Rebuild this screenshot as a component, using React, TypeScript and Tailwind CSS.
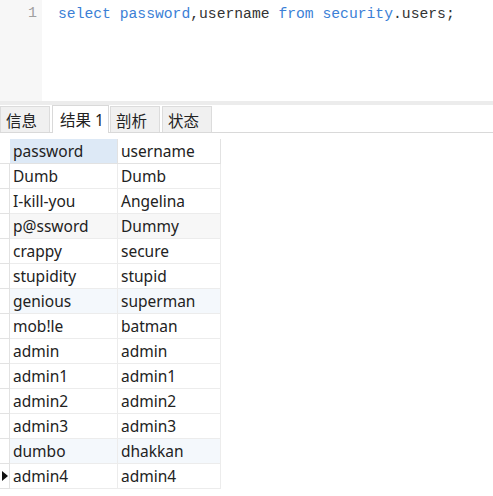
const rows: [string, string][] = [
  ["Dumb", "Dumb"],
  ["I-kill-you", "Angelina"],
  ["p@ssword", "Dummy"],
  ["crappy", "secure"],
  ["stupidity", "stupid"],
  ["genious", "superman"],
  ["mob!le", "batman"],
  ["admin", "admin"],
  ["admin1", "admin1"],
  ["admin2", "admin2"],
  ["admin3", "admin3"],
  ["dumbo", "dhakkan"],
  ["admin4", "admin4"],
];

const shade: Record<number, string> = {
  2: "bg-[#f7f7f7]",
  5: "bg-[#f4f8fc]",
  11: "bg-[#f4f8fc]",
};

const tabs = ["信息", "结果 1", "剖析", "状态"];

export default function App() {
  return (
    <div
      className="w-[493px] h-[496px] bg-white overflow-hidden flex flex-col"
      style={{ fontFamily: '"Noto Sans", "Noto Sans CJK SC", sans-serif' }}
    >
      {/* Editor */}
      <div className="flex h-[101px]">
        <div className="w-[42px] bg-[#f7f7f7] text-right pr-[5px] pt-[3px] text-[15px] text-[#a0a0a0] font-['Liberation_Mono',monospace]">
          1
        </div>
        <div className="pl-[16px] pt-[3px] text-[14.7px] font-['Liberation_Mono',monospace] text-[#333] whitespace-pre">
          <span className="text-[#3b7fd6]">select</span>{" "}
          <span className="text-[#3b7fd6]">password</span>,username{" "}
          <span className="text-[#3b7fd6]">from</span>{" "}
          <span className="text-[#3b7fd6]">security</span>.users;
        </div>
      </div>
      <div className="h-[4px] bg-[#ececec]" />

      {/* Tabs */}
      <div className="flex items-end h-[28px] border-b border-[#d9d9d9] bg-white">
        {tabs.map((t, i) => (
          <div
            key={t}
            className={
              i === 1
                ? "h-[28px] w-[57px] mr-[1px] bg-white border-x border-t border-[#d9d9d9] -mb-px text-[15.5px] text-[#222] pl-[7px] leading-[29px]"
                : "h-[26px] w-[50px] mr-[2px] bg-[#f0f0f0] border-x border-t border-[#dcdcdc] text-[15.5px] text-[#222] pl-[5px] leading-[28px]"
            }
          >
            {t}
          </div>
        ))}
      </div>

      {/* Result grid */}
      <div className="pt-[6px] flex flex-col text-[15.5px] text-[#222]">
        <div className="flex h-[25px]">
          <div className="w-[10px] border-b border-[#e2e2e2]" />
          <div className="w-[108px] bg-[#dde9f6] border-r border-b border-[#e2e2e2] pl-[3px] leading-[24px]">
            password
          </div>
          <div className="w-[103px] border-r border-b border-[#e2e2e2] pl-[3px] leading-[24px]">
            username
          </div>
        </div>
        {rows.map(([p, u], i) => (
          <div key={i} className="flex h-[25px]">
            <div className="w-[10px] bg-white border-r border-b border-[#e2e2e2] flex items-center">
              {i === rows.length - 1 && (
                <svg width="6" height="10" viewBox="0 0 6 10" className="ml-[2px]">
                  <path d="M0 0 L6 5 L0 10 Z" fill="#111" />
                </svg>
              )}
            </div>
            <div className={`w-[108px] border-r border-b border-[#ececec] pl-[3px] leading-[24px] ${shade[i] ?? ""}`}>
              {p}
            </div>
            <div className={`w-[103px] border-r border-b border-[#ececec] pl-[3px] leading-[24px] ${shade[i] ?? ""}`}>
              {u}
            </div>
          </div>
        ))}
      </div>
    </div>
  );
}
